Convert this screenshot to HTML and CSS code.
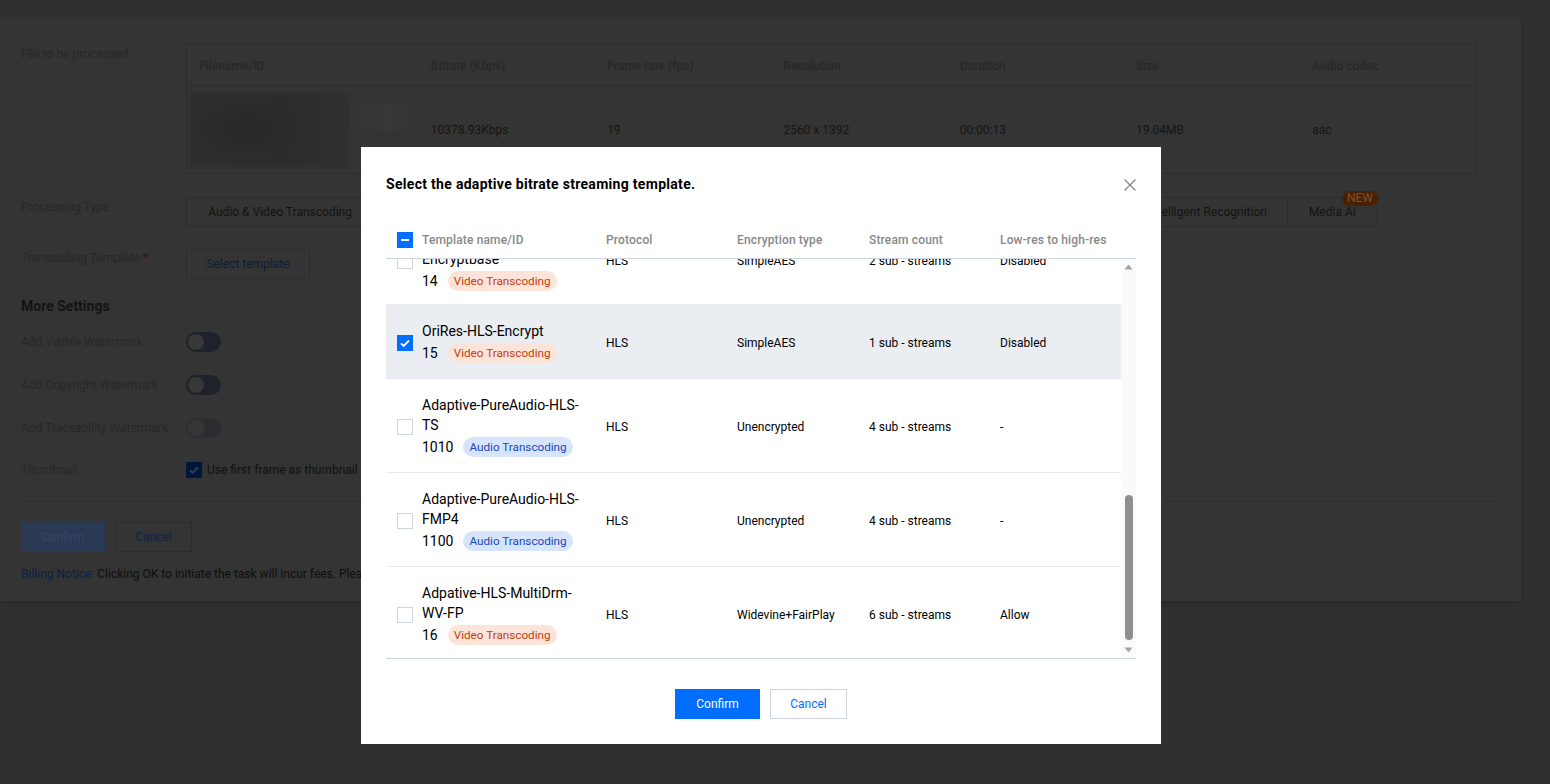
FILE: index.html
```html
<!DOCTYPE html>
<html lang="en">
<head>
<meta charset="utf-8">
<title>Select template</title>
<link rel="stylesheet" href="styles.css">
</head>
<body>
<div class="page">
  <div class="card">
    <div class="form-row">
      <div class="label label-file">File to be processed</div>
      <table class="file-table">
        <thead>
          <tr>
            <th class="c-name">Filename/ID</th>
            <th>Bitrate (Kbps)</th>
            <th>Frame rate (fps)</th>
            <th>Resolution</th>
            <th>Duration</th>
            <th>Size</th>
            <th>Audio codec</th>
          </tr>
        </thead>
        <tbody>
          <tr>
            <td class="c-thumb"><div class="thumb"><div class="thumb-main"></div><div class="thumb-side"></div></div></td>
            <td>10378.93Kbps</td>
            <td>19</td>
            <td>2560 x 1392</td>
            <td>00:00:13</td>
            <td>19.04MB</td>
            <td>aac</td>
          </tr>
        </tbody>
      </table>
    </div>

    <div class="form-row row-type">
      <div class="label">Processing Type</div>
      <div class="tabs">
        <div class="tab grow">Audio &amp; Video Transcoding</div>
        <div class="tab grow">Audio &amp; Video Enhancement</div>
        <div class="tab grow">Screenshot</div>
        <div class="tab grow">Content Moderation</div>
        <div class="tab grow">Content Analysis</div>
        <div class="tab">Intelligent Recognition</div>
        <div class="tab tab-ai">Media AI<span class="badge-new">NEW</span></div>
      </div>
    </div>

    <div class="form-row row-template">
      <div class="label">Transcoding Template <span class="req">*</span></div>
      <div class="btn-outline">Select template</div>
    </div>

    <div class="section-title">More Settings</div>

    <div class="set-row first">
      <div class="label">Add Visible Watermark</div>
      <div class="toggle"><span class="knob"></span></div>
    </div>
    <div class="set-row">
      <div class="label">Add Copyright Watermark</div>
      <div class="toggle"><span class="knob"></span></div>
    </div>
    <div class="set-row">
      <div class="label">Add Traceability Watermark</div>
      <div class="toggle disabled"><span class="knob"></span></div>
    </div>
    <div class="set-row thumb-row">
      <div class="label">Thumbnail</div>
      <div class="bg-check">
        <span class="bg-box"><svg viewBox="0 0 16 16" width="16" height="16"><path d="M4 8.2l2.6 2.6L12 5.4" fill="none" stroke="#3a4253" stroke-width="1.8"/></svg></span>
        <span>Use first frame as thumbnail</span>
      </div>
    </div>

    <div class="divider"></div>

    <div class="bg-actions">
      <div class="bg-btn-primary">Confirm</div>
      <div class="bg-btn-cancel">Cancel</div>
    </div>
    <div class="billing"><span class="billing-link">Billing Notice:</span> Clicking OK to initiate the task will incur fees. Please check the pricing before confirming the operation.</div>
  </div>
</div>

<div class="modal">
  <div class="modal-head">
    <div class="modal-title">Select the adaptive bitrate streaming template.</div>
    <svg class="close" viewBox="0 0 14 14" width="14" height="14"><path d="M1.5 1.5l11 11M12.5 1.5l-11 11" stroke="#888" stroke-width="1.4" fill="none"/></svg>
  </div>

  <div class="tpl-table">
    <div class="tpl-head grid">
      <div class="cell-check"><span class="cb cb-indet"><span class="dash"></span></span></div>
      <div>Template name/ID</div>
      <div>Protocol</div>
      <div>Encryption type</div>
      <div>Stream count</div>
      <div>Low-res to high-res</div>
    </div>
    <div class="tpl-body">
      <div class="viewport">
        <div class="rows">
          <div class="tpl-row grid first-row">
            <div class="cell-check"><span class="cb"></span></div>
            <div class="name-cell"><div class="name">Adaptive-HLS-<br>Encryptbase</div><div class="idline">14<span class="tag tag-video">Video Transcoding</span></div></div>
            <div>HLS</div>
            <div>SimpleAES</div>
            <div>2 sub - streams</div>
            <div>Disabled</div>
          </div>
          <div class="tpl-row grid selected">
            <div class="cell-check"><span class="cb cb-on"><svg viewBox="0 0 16 16" width="16" height="16"><path d="M4 8.3l2.7 2.6L12 5.5" fill="none" stroke="#fff" stroke-width="1.8"/></svg></span></div>
            <div class="name-cell"><div class="name">OriRes-HLS-Encrypt</div><div class="idline">15<span class="tag tag-video">Video Transcoding</span></div></div>
            <div>HLS</div>
            <div>SimpleAES</div>
            <div>1 sub - streams</div>
            <div>Disabled</div>
          </div>
          <div class="tpl-row grid">
            <div class="cell-check"><span class="cb"></span></div>
            <div class="name-cell"><div class="name">Adaptive-PureAudio-HLS-<br>TS</div><div class="idline">1010<span class="tag tag-audio">Audio Transcoding</span></div></div>
            <div>HLS</div>
            <div>Unencrypted</div>
            <div>4 sub - streams</div>
            <div>-</div>
          </div>
          <div class="tpl-row grid">
            <div class="cell-check"><span class="cb"></span></div>
            <div class="name-cell"><div class="name">Adaptive-PureAudio-HLS-<br>FMP4</div><div class="idline">1100<span class="tag tag-audio">Audio Transcoding</span></div></div>
            <div>HLS</div>
            <div>Unencrypted</div>
            <div>4 sub - streams</div>
            <div>-</div>
          </div>
          <div class="tpl-row grid last">
            <div class="cell-check"><span class="cb"></span></div>
            <div class="name-cell"><div class="name">Adpative-HLS-MultiDrm-<br>WV-FP</div><div class="idline">16<span class="tag tag-video">Video Transcoding</span></div></div>
            <div>HLS</div>
            <div>Widevine+FairPlay</div>
            <div>6 sub - streams</div>
            <div>Allow</div>
          </div>
        </div>
      </div>
      <div class="scrollbar">
        <svg class="arrow" viewBox="0 0 15 15" width="15" height="15"><path d="M3.5 10.5h8l-4-5z" fill="#a3a3a3"/></svg>
        <div class="track"><div class="thumb-bar"></div></div>
        <svg class="arrow" viewBox="0 0 15 15" width="15" height="15"><path d="M3.5 4.5h8l-4 5z" fill="#a3a3a3"/></svg>
      </div>
    </div>
  </div>

  <div class="modal-foot">
    <div class="btn-primary">Confirm</div>
    <div class="btn-cancel">Cancel</div>
  </div>
</div>
</body>
</html>
```

FILE: styles.css
```css
* { box-sizing: border-box; }

body {
  margin: 0;
  width: 1550px;
  height: 784px;
  overflow: hidden;
  position: relative;
  background: #303030;
  font-family: Roboto, "Noto Sans", "Liberation Sans", sans-serif;
  font-size: 12px;
  color: #141414;
}

.page { padding-top: 17px; }

.card {
  width: 1521px;
  height: 584px;
  background: #343434;
  padding: 26px 20px 0 21px;
  box-shadow: 0 2px 4px rgba(0, 0, 0, 0.18);
}

.form-row { display: flex; align-items: flex-start; }

.label {
  width: 165px;
  flex-shrink: 0;
  line-height: 18px;
  color: #272727;
}
.label-file { padding-top: 2px; }
.req { color: #3d1010; }

/* file table */
.file-table {
  width: 1291px;
  border: 1px solid #2c2c2c;
  border-collapse: collapse;
  table-layout: fixed;
}
.file-table th {
  height: 42px;
  text-align: left;
  padding: 3px 12px 0;
  font-weight: 600;
  color: #282828;
  border-bottom: 1px solid #2c2c2c;
  width: 176px;
}
.file-table th.c-name { width: 232px; }
.file-table td {
  height: 88px;
  padding: 1px 12px 0;
  color: #141414;
}
.file-table td.c-thumb { padding: 0 8px 0 3px; }
.thumb {
  position: relative;
  width: 220px;
  height: 74px;
}
.thumb-main {
  width: 160px;
  height: 74px;
  background:
    radial-gradient(ellipse 60px 28px at 55px 36px, #272727, rgba(39,39,39,0) 95%),
    linear-gradient(90deg, #2e2e2e, #2c2c2c 60%, #303030);
  filter: blur(1.5px);
}
.thumb-side {
  position: absolute;
  left: 160px;
  top: 9px;
  width: 60px;
  height: 29px;
  background: linear-gradient(90deg, #343434, #373737 60%, #363636);
  filter: blur(1px);
}

/* processing type */
.row-type { margin-top: 23px; }
.row-type .label { padding-top: 1px; }
.tabs {
  display: flex;
  width: 1192px;
  height: 30px;
}
.tab {
  position: relative;
  height: 30px;
  line-height: 28px;
  padding: 0 20px;
  border: 1px solid #2c2c2c;
  margin-left: -1px;
  color: #131313;
  white-space: nowrap;
  text-align: center;
}
.tab:first-child { margin-left: 0; }
.tab.grow { flex: 1; }
.tab-ai { padding: 0 21px; }
.badge-new {
  position: absolute;
  right: -1px;
  top: -7px;
  height: 15px;
  line-height: 15px;
  padding: 0 5px;
  border-radius: 8px;
  background: #4a2100;
  color: #7c5230;
  font-size: 12px;
}

/* template */
.row-template { margin-top: 22px; }
.btn-outline {
  width: 124px;
  height: 30px;
  line-height: 28px;
  text-align: center;
  border: 1px solid #2c2c2c;
  color: #0b1c38;
}

.section-title {
  margin-top: 17px;
  font-size: 14px;
  font-weight: 700;
  line-height: 20px;
  color: #131313;
}

.set-row {
  display: flex;
  align-items: center;
  height: 20px;
  margin-top: 23px;
}
.set-row.first { margin-top: 16px; }
.set-row.thumb-row { margin-top: 22px; }

.toggle {
  width: 35px;
  height: 20px;
  border-radius: 10px;
  background: #1e222b;
  position: relative;
}
.toggle .knob {
  position: absolute;
  left: 2px;
  top: 2px;
  width: 16px;
  height: 16px;
  border-radius: 50%;
  background: #383838;
}
.toggle.disabled { background: #2b2d31; }
.toggle.disabled .knob { background: #363636; }

.bg-check { display: flex; align-items: center; color: #111; }
.bg-box {
  width: 16px;
  height: 16px;
  background: #00163a;
  margin-right: 5px;
  display: flex;
}

.divider {
  margin-top: 21px;
  height: 1px;
  background: #2e2e2e;
}

.bg-actions { display: flex; margin-top: 20px; gap: 10px; }
.bg-btn-primary {
  width: 84px;
  height: 30px;
  line-height: 30px;
  text-align: center;
  background: #2a3a55;
  color: #34466a;
}
.bg-btn-cancel {
  width: 77px;
  height: 30px;
  line-height: 28px;
  text-align: center;
  border: 1px solid #2c2c2c;
  color: #0d2247;
}
.billing {
  margin-top: 13px;
  line-height: 18px;
  color: #0e0e0e;
  white-space: nowrap;
}
.billing-link { color: #0b2049; }

/* ---------- modal ---------- */
.modal {
  position: absolute;
  left: 361px;
  top: 147px;
  width: 800px;
  height: 597px;
  background: #fff;
  padding: 27px 25px 25px;
  color: #000;
}
.modal-head {
  display: flex;
  justify-content: space-between;
  align-items: center;
  height: 20px;
}
.modal-title {
  font-size: 14px;
  font-weight: 700;
  line-height: 20px;
  letter-spacing: 0.3px;
  color: #000;
}
.close { margin-right: -1px; margin-top: 2px; }

.tpl-table { margin-top: 28px; }

.grid {
  display: grid;
  grid-template-columns: 36px 184px 131px 132px 131px 1fr;
  align-items: center;
}
.cell-check { padding-left: 11px; display: flex; }

.tpl-head {
  height: 37px;
  border-bottom: 1px solid #cfd5de;
  color: #888;
  font-size: 12px;
  font-weight: 500;
  letter-spacing: 0.15px;
}

.cb {
  width: 16px;
  height: 16px;
  border: 1px solid #cfd5de;
  background: #fff;
  display: flex;
  align-items: center;
  justify-content: center;
}
.cb-indet { background: #006eff; border-color: #006eff; }
.cb-indet .dash { width: 8px; height: 2px; background: #fff; }
.cb-on { background: #006eff; border-color: #006eff; }
.cb-on svg { flex-shrink: 0; }

.tpl-body {
  display: flex;
  height: 400px;
  border-bottom: 1px solid #cfd5de;
}
.viewport {
  width: 735px;
  height: 399px;
  overflow: hidden;
}
.rows { margin-top: -46px; }

.tpl-row {
  padding: 16px 0 13px;
  border-bottom: 1px solid #e7eaef;
  font-size: 12px;
  color: #000;
}
.tpl-row.first-row { padding-bottom: 11px; }
.tpl-row.last { border-bottom: none; }
.tpl-row.selected { background: #eaedf2; }

.name {
  font-size: 14px;
  line-height: 20px;
}
.idline {
  font-size: 14px;
  display: flex;
  align-items: center;
  height: 24px;
}
.tag {
  display: inline-block;
  height: 20px;
  line-height: 20px;
  padding: 0 6px;
  margin-left: 10px;
  border-radius: 10px;
  font-size: 11.7px;
}
.tag-video { background: #fde4d8; color: #c13e12; }
.tag-audio { background: #d6e5fc; color: #1b47b9; }

.scrollbar {
  width: 15px;
  height: 399px;
  background: #fafafa;
  display: flex;
  flex-direction: column;
}
.arrow { flex-shrink: 0; }
.track { flex: 1; position: relative; }
.thumb-bar {
  position: absolute;
  left: 4px;
  width: 8px;
  top: 221px;
  height: 145px;
  border-radius: 4px;
  background: #8f8f8f;
}

.modal-foot {
  display: flex;
  justify-content: center;
  gap: 10px;
  margin-top: 30px;
}
.btn-primary {
  width: 85px;
  height: 30px;
  line-height: 30px;
  text-align: center;
  background: #006eff;
  color: #fff;
  font-size: 12px;
}
.btn-cancel {
  width: 77px;
  height: 30px;
  line-height: 28px;
  text-align: center;
  border: 1px solid #cfd5de;
  color: #006eff;
  font-size: 12px;
}
```
